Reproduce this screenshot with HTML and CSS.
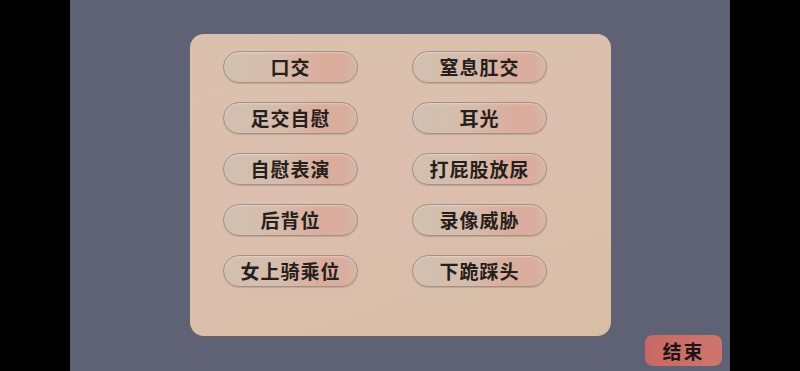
FILE: index.html
```html
<!DOCTYPE html>
<html lang="zh-CN">
<head>
  <meta charset="UTF-8" />
  <meta name="viewport" content="width=device-width, initial-scale=1.0" />
  <title>选择</title>
  <link rel="stylesheet" href="styles.css">
</head>
<body>
  <div class="screen">
    <div class="stage">
      <div class="panel">
        <div class="option-grid">
          <button class="option">口交</button>
          <button class="option">窒息肛交</button>
          <button class="option">足交自慰</button>
          <button class="option">耳光</button>
          <button class="option">自慰表演</button>
          <button class="option">打屁股放尿</button>
          <button class="option">后背位</button>
          <button class="option">录像威胁</button>
          <button class="option">女上骑乘位</button>
          <button class="option">下跪踩头</button>
        </div>
      </div>
      <button class="end-btn">结束</button>
    </div>
  </div>
</body>
</html>
```

FILE: styles.css
```css
html, body {
  margin: 0;
  padding: 0;
  background: #000;
}
body {
  font-family: "Noto Sans CJK SC", "Noto Sans", sans-serif;
}
.screen {
  width: 800px;
  height: 371px;
  display: flex;
  justify-content: center;
  overflow: hidden;
}
.stage {
  width: 660px;
  height: 371px;
  background: #5f6275;
  display: flex;
  flex-direction: column;
  box-sizing: border-box;
  padding-top: 34px;
}
.panel {
  margin-left: 120px;
  width: 421px;
  height: 302px;
  box-sizing: border-box;
  border-radius: 14px;
  background: linear-gradient(160deg, #dbc1ad 0%, #dcbfae 45%, #d8bea6 100%);
  box-shadow: 0 1px 0 #7a5e58;
  padding: 17px 0 0 33px;
}
.option-grid {
  display: grid;
  grid-template-columns: 135px 135px;
  column-gap: 54px;
  row-gap: 19px;
}
.option {
  height: 32px;
  border-radius: 16px;
  border: 1px solid #a39086;
  background: linear-gradient(to right, #d1c0b1 0%, #d6bcab 40%, #dbac9c 75%, #daad9e 90%, #d6b6a8 100%);
  box-shadow: inset 0 1px 2px rgba(255,255,255,0.35), 0 1px 1px rgba(120,90,80,0.25);
  font-family: inherit;
  font-size: 19px;
  font-weight: 700;
  color: #26201d;
  padding: 0;
  line-height: 30px;
  letter-spacing: 1px;
  cursor: pointer;
}
.end-btn {
  align-self: flex-end;
  margin-right: 8px;
  margin-top: -1px;
  width: 77px;
  height: 31px;
  border: none;
  border-radius: 8px;
  background: linear-gradient(to right, #c86864, #cf7570);
  font-family: inherit;
  font-size: 19px;
  font-weight: 700;
  color: #1e1616;
  letter-spacing: 2px;
  padding: 0;
  cursor: pointer;
}
```
